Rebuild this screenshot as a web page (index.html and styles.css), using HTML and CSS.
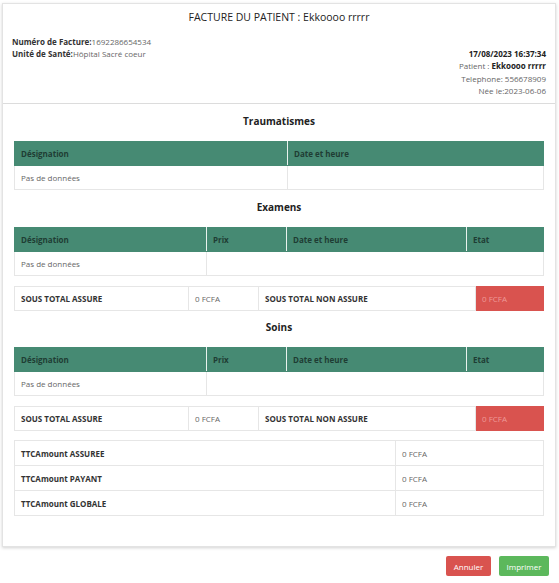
FILE: index.html
```html
<!DOCTYPE html>
<html>
<head>
<meta charset="utf-8">
<link rel="stylesheet" href="styles.css">
</head>
<body>
<div class="card">
  <div class="head">
    <div class="title">FACTURE DU PATIENT : Ekkoooo rrrrr</div>
    <div class="info">
      <div class="left">
        <div><b>Numéro de Facture:</b>1692286654534</div>
        <div><b>Unité de Santé:</b>Hôpital Sacré coeur</div>
      </div>
      <div class="right">
        <div class="date">17/08/2023 16:37:34</div>
        <div>Patient : <b>Ekkoooo rrrrr</b></div>
        <div>Telephone: 556678909</div>
        <div>Née le:2023-06-06</div>
      </div>
    </div>
  </div>
  <div class="body">
    <h3>Traumatismes</h3>
    <table class="grid">
      <colgroup><col style="width:273px"><col></colgroup>
      <tr class="th"><td>Désignation</td><td>Date et heure</td></tr>
      <tr><td>Pas de données</td><td></td></tr>
    </table>

    <h3>Examens</h3>
    <table class="grid">
      <colgroup><col style="width:192px"><col style="width:80px"><col style="width:180px"><col></colgroup>
      <tr class="th"><td>Désignation</td><td>Prix</td><td>Date et heure</td><td>Etat</td></tr>
      <tr><td>Pas de données</td><td colspan="3"></td></tr>
    </table>
    <table class="sub">
      <colgroup><col style="width:174px"><col style="width:70px"><col style="width:217px"><col></colgroup>
      <tr><td class="b">SOUS TOTAL ASSURE</td><td>0 FCFA</td><td class="b">SOUS TOTAL NON ASSURE</td><td class="red">0 FCFA</td></tr>
    </table>

    <h3>Soins</h3>
    <table class="grid">
      <colgroup><col style="width:192px"><col style="width:80px"><col style="width:180px"><col></colgroup>
      <tr class="th"><td>Désignation</td><td>Prix</td><td>Date et heure</td><td>Etat</td></tr>
      <tr><td>Pas de données</td><td colspan="3"></td></tr>
    </table>
    <table class="sub">
      <colgroup><col style="width:174px"><col style="width:70px"><col style="width:217px"><col></colgroup>
      <tr><td class="b">SOUS TOTAL ASSURE</td><td>0 FCFA</td><td class="b">SOUS TOTAL NON ASSURE</td><td class="red">0 FCFA</td></tr>
    </table>

    <table class="ttc">
      <colgroup><col style="width:381px"><col></colgroup>
      <tr><td class="b">TTCAmount ASSUREE</td><td>0 FCFA</td></tr>
      <tr><td class="b">TTCAmount PAYANT</td><td>0 FCFA</td></tr>
      <tr><td class="b">TTCAmount GLOBALE</td><td>0 FCFA</td></tr>
    </table>
  </div>
</div>
<div class="actions">
  <button class="btn cancel">Annuler</button>
  <button class="btn print">Imprimer</button>
</div>
</body>
</html>
```
FILE: styles.css
```css
* { box-sizing: border-box; }
body {
  margin: 0;
  font-family: "Open Sans", "Noto Sans", sans-serif;
  font-size: 8px;
  color: #333;
  background: #fff;
}
.card {
  margin: 3px 2px 0 2px;
  width: 554px;
  height: 544px;
  border: 1px solid #e3e3e3;
  box-shadow: 0 1px 3px rgba(0,0,0,0.18);
  background: #fff;
}
.head {
  height: 100px;
  border-bottom: 1px solid #dcdcdc;
  padding: 6px 9px 0 9px;
}
.title {
  text-align: center;
  font-size: 10.5px;
  color: #222;
  line-height: 14px;
}
.info {
  display: flex;
  justify-content: space-between;
  margin-top: 12px;
}
.left { line-height: 12px; color: #666; }
.left b { color: #333; }
.right {
  text-align: right;
  line-height: 12.3px;
  color: #666;
  padding-top: 12px;
}
.right b, .right .date { color: #222; font-weight: 700; }
.body { padding: 10px 11px 0 11px; }
h3 {
  margin: 0;
  text-align: center;
  font-size: 10px;
  font-weight: 700;
  color: #222;
  line-height: 14px;
}
table {
  width: 100%;
  border-collapse: collapse;
  table-layout: fixed;
}
td {
  border: 1px solid #e6e6e6;
  padding: 0 6px;
  height: 24px;
  vertical-align: middle;
  color: #666;
}
.grid { margin-top: 13px; }
.grid .th td {
  background: #468a73;
  color: #1f3d33;
  font-weight: 700;
  height: 24px;
  border: 1px solid #468a73;
  border-right: 1px solid #e9f2ee;
}
.grid .th td:last-child { border-right-color: #468a73; }
.sub { margin-top: 10px; margin-bottom: 9px; }
.b { font-weight: 700; color: #333; }
.red { background: #d9534f; color: #ee9a97; border-color: #d9534f; }
.grid + h3 { margin-top: 10px; }
.ttc { margin-top: 1px; }
.ttc td { height: 25px; }
.actions {
  display: flex;
  justify-content: flex-end;
  gap: 8px;
  padding: 9px 10px 0 0;
}
.btn {
  border: none;
  border-radius: 2px;
  color: #fff;
  font-family: "Open Sans", sans-serif;
  font-size: 8px;
  height: 20px;
  padding: 0 6px;
}
.cancel { background: #d9534f; width: 45px; }
.print { background: #5cb85c; width: 50px; }
```
